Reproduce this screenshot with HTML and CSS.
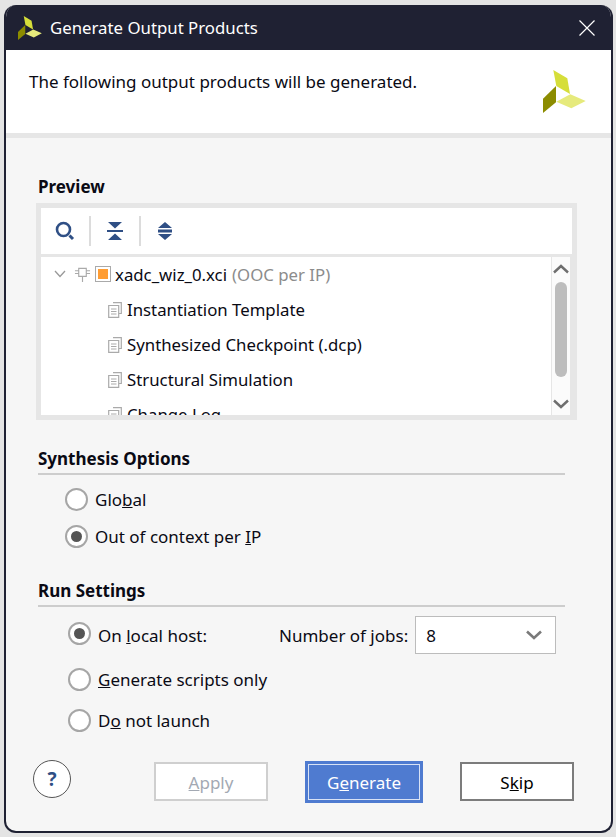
FILE: index.html
```html
<!DOCTYPE html>
<html lang="en">
<head>
    <meta charset="UTF-8">
    <title>Generate Output Products</title>
    <link rel="stylesheet" href="styles.css">
</head>

<body>

  <div class="dialog">

    <div class="titlebar">
      <svg class="logo-small" viewBox="0 0 43 43">
        <polygon points="10.3,0 24.3,8.3 27,24 13.3,16" fill="#d6de3a"/>
        <polygon points="13.3,31.7 27.3,24.3 42.7,31 28.3,38.3" fill="#e6ea7c"/>
        <polygon points="0,28.7 13,16 13,32.3 0,43" fill="#8c8c00"/>
      </svg>
      <span class="title">Generate Output Products</span>
      <svg class="close" viewBox="0 0 16 16">
        <path d="M0.5 0.5 L15.5 15.5 M15.5 0.5 L0.5 15.5" stroke="#fff" stroke-width="1.2" fill="none"/>
      </svg>
    </div>

    <div class="banner">
      <p class="banner-text">The following output products will be generated.</p>
      <svg class="logo-big" viewBox="0 0 43 43">
        <polygon points="10.3,0 24.3,8.3 27,24 13.3,16" fill="#d6de3a"/>
        <polygon points="13.3,31.7 27.3,24.3 42.7,31 28.3,38.3" fill="#e6ea7c"/>
        <polygon points="0,28.7 13,16 13,32.3 0,43" fill="#8c8c00"/>
      </svg>
    </div>

    <div class="content">

      <h2 class="preview-title">Preview</h2>
      <div class="panel">
        <div class="toolbar">
          <svg class="tool" viewBox="0 0 20 20">
            <circle cx="8.5" cy="8.5" r="6.5" fill="none" stroke="#2f4f85" stroke-width="2.6"/>
            <path d="M14.5 14.5 L18 18" stroke="#2f4f85" stroke-width="3"/>
          </svg>
          <span class="tool-sep"></span>
          <svg class="tool" viewBox="0 0 20 20">
            <path d="M3 1 H17 L10 7.5 Z M3 19 H17 L10 12.5 Z" fill="#2f4f85"/>
            <rect x="2" y="9" width="16" height="2" fill="#2f4f85"/>
          </svg>
          <span class="tool-sep"></span>
          <svg class="tool" viewBox="0 0 20 20">
            <path d="M10 1 L17 7 H3 Z M10 19 L3 13 H17 Z" fill="#2f4f85"/>
            <rect x="3" y="8.5" width="14" height="3" fill="#2f4f85"/>
          </svg>
        </div>
        <div class="tree-wrap">
          <div class="tree">
            <div class="tree-row root">
              <svg class="twisty" viewBox="0 0 12 8">
                <path d="M1 1 L6 6.5 L11 1" fill="none" stroke="#999" stroke-width="1.3"/>
              </svg>
              <svg class="chip" viewBox="0 0 18 18">
                <path d="M5 2.5 H13 V11 H5 Z M9 11 V17 M1 5 H5 M1 8 H5 M13 5 H17 M13 8 H17" fill="#fff" stroke="#aaa" stroke-width="1.2"/>
              </svg>
              <span class="ip-box"><span class="ip-fill"></span></span>
              <span>xadc_wiz_0.xci</span>
              <span class="muted">(OOC per IP)</span>
            </div>
            <div class="tree-row child">
              <svg class="doc" viewBox="0 0 14 16"><use href="#doc-icon"/></svg>
              <span>Instantiation Template</span>
            </div>
            <div class="tree-row child">
              <svg class="doc" viewBox="0 0 14 16"><use href="#doc-icon"/></svg>
              <span>Synthesized Checkpoint (.dcp)</span>
            </div>
            <div class="tree-row child">
              <svg class="doc" viewBox="0 0 14 16"><use href="#doc-icon"/></svg>
              <span>Structural Simulation</span>
            </div>
            <div class="tree-row child">
              <svg class="doc" viewBox="0 0 14 16"><use href="#doc-icon"/></svg>
              <span>Change Log</span>
            </div>
          </div>
          <div class="scrollbar">
            <svg class="arrow" viewBox="0 0 16 10"><path d="M1 8.5 L8 2 L15 8.5" fill="none" stroke="#6e6e6e" stroke-width="2.4"/></svg>
            <div class="thumb"></div>
            <svg class="arrow" viewBox="0 0 16 10"><path d="M1 1.5 L8 8 L15 1.5" fill="none" stroke="#6e6e6e" stroke-width="2.4"/></svg>
          </div>
        </div>
      </div>

      <h2 class="section-title synth-title">Synthesis Options</h2>
      <div class="synth-options">
        <label class="option"><span class="radio"></span><span>Glo<u>b</u>al</span></label>
        <label class="option"><span class="radio checked"></span><span>Out of context per <u>I</u>P</span></label>
      </div>

      <h2 class="section-title run-title">Run Settings</h2>
      <div class="run-options">
        <div class="option local">
          <span class="radio checked"></span><span class="low">On <u>l</u>ocal host:</span>
          <span class="jobs-label low">Number of jobs:</span>
          <span class="combo">
            <span>8</span>
            <svg class="combo-arrow" viewBox="0 0 16 10"><path d="M1 1.5 L8 8 L15 1.5" fill="none" stroke="#7a7a7a" stroke-width="2.6"/></svg>
          </span>
        </div>
        <label class="option"><span class="radio"></span><span><u>G</u>enerate scripts only</span></label>
        <label class="option"><span class="radio"></span><span>D<u>o</u> not launch</span></label>
      </div>

      <div class="buttons">
        <span class="help">?</span>
        <button type="button" class="btn btn-disabled"><u>A</u>pply</button>
        <button type="button" class="btn btn-default">G<u>e</u>nerate</button>
        <button type="button" class="btn btn-plain">S<u>k</u>ip</button>
      </div>

    </div>
  </div>

  <svg class="defs" width="0" height="0">
    <symbol id="doc-icon" viewBox="0 0 14 16">
      <path d="M5 0.7 H13.3 V11.5 H11 M0.7 3.5 H10.7 V15.3 H0.7 Z" fill="#fff" stroke="#aaa" stroke-width="1.2"/>
      <path d="M3 7 H8.5 M3 9.5 H8.5 M3 12 H8.5" stroke="#aaa" stroke-width="1"/>
    </symbol>
  </svg>

</body>
</html>
```

FILE: styles.css
```css
* {
	box-sizing: border-box;
}
html, body {
	height: 100%;
}
body {
	margin: 0;
	background: #e4e4e4;
	font-family: "Noto Sans", "Open Sans", sans-serif;
	font-size: 17px;
	color: #0a0a14;
	overflow: hidden;
}
.defs {
	position: absolute;
}

.dialog {
	width: 609px;
	height: 828px;
	margin: 5px 0 0 4px;
	background: #f6f6f6;
	border: 2px solid #1f2133;
	border-top: none;
	border-radius: 12px;
	overflow: hidden;
	display: flex;
	flex-direction: column;
}

.titlebar {
	flex: 0 0 45px;
	background: #1f2133;
	display: flex;
	align-items: center;
	padding: 0 16px 0 12px;
	color: #fff;
}
.logo-small {
	width: 24px;
	height: 24px;
	margin-right: 8px;
}
.title {
	flex: 1;
	font-size: 16.8px;
}
.close {
	width: 16px;
	height: 16px;
}

.banner {
	flex: 0 0 88px;
	background: #fff;
	border-bottom: 5px solid #e6e6e6;
	display: flex;
	justify-content: space-between;
	padding: 20px 25px 0 23px;
}
.banner-text {
	margin: 0;
}
.logo-big {
	width: 43px;
	height: 43px;
}

.content {
	flex: 1;
	padding: 0 0 0 32px;
}

.preview-title, .section-title {
	margin: 0;
	font-size: 17px;
	font-weight: 700;
	line-height: 22px;
}
.preview-title {
	margin-top: 38px;
	padding-bottom: 5px;
}
.section-title {
	width: 527px;
	padding-bottom: 4px;
	border-bottom: 2px solid #cdcdcd;
}
.synth-title {
	margin-top: 27px;
	height: 28px;
	padding-top: 1px;
}
.run-title {
	margin-top: 24px;
	height: 28px;
	padding-top: 1px;
}

.panel {
	width: 541px;
	height: 217px;
	margin-left: -2px;
	border: 5px solid #e6e6e6;
	background: #e6e6e6;
}
.toolbar {
	height: 46px;
	background: #fff;
	display: flex;
	align-items: center;
	padding-left: 14px;
	margin-bottom: 3px;
}
.tool {
	width: 20px;
	height: 20px;
}
.tool-sep {
	width: 2px;
	height: 30px;
	background: #dcdcdc;
	margin: 0 14px;
}
.tree-wrap {
	height: 158px;
	display: flex;
	padding-right: 2px;
}
.tree {
	flex: 1;
	background: #fff;
	overflow: hidden;
	padding-top: 1px;
	font-size: 16.8px;
}
.tree-row {
	height: 35px;
	display: flex;
	align-items: center;
	white-space: nowrap;
}
.root {
	height: 32px;
	margin-bottom: 2px;
	padding-left: 13px;
}
.twisty {
	width: 12px;
	height: 8px;
	margin-right: 8px;
}
.chip {
	width: 17px;
	height: 17px;
	margin-right: 4px;
}
.ip-box {
	width: 16px;
	height: 16px;
	border: 1px solid #aaa;
	padding: 2px;
	margin-right: 4px;
}
.ip-fill {
	display: block;
	width: 100%;
	height: 100%;
	background: #ff9d33;
}
.muted {
	color: #8c8c8c;
	margin-left: 5px;
}
.child {
	padding-left: 67px;
}
.doc {
	width: 14px;
	height: 16px;
	margin-right: 5px;
}
.scrollbar {
	width: 18px;
	margin-left: 1px;
	background: #fbfbfb;
	display: flex;
	flex-direction: column;
	align-items: center;
	padding-top: 7px;
}
.arrow {
	width: 16px;
	height: 10px;
}
.thumb {
	width: 12px;
	height: 95px;
	margin: 8px 0 22px;
	background: #bdbdbd;
	border-radius: 6px;
}

.option {
	display: flex;
	align-items: center;
	height: 37px;
}
.synth-options {
	margin: 6px 0 0 27px;
}
.run-options {
	margin: 6px 0 0 30px;
}
.run-options .option {
	height: 41px;
}
.run-options .local {
	margin-bottom: 5px;
}
.low {
	margin-top: 4px;
}
.radio {
	width: 23px;
	height: 23px;
	border: 2px solid #a6a6a6;
	border-radius: 50%;
	background: #fff;
	margin-right: 7px;
	flex: none;
	display: flex;
	align-items: center;
	justify-content: center;
}
.checked::after {
	content: "";
	width: 11px;
	height: 11px;
	border-radius: 50%;
	background: #555;
}
.jobs-label {
	margin-left: 72px;
	margin-right: 7px;
}
.combo {
	width: 141px;
	height: 38px;
	margin-top: 3px;
	background: #fff;
	border: 1px solid #bcbcbc;
	display: flex;
	align-items: center;
	justify-content: space-between;
	padding: 0 13px 0 10px;
}
.combo-arrow {
	width: 16px;
	height: 10px;
}

.buttons {
	display: flex;
	align-items: center;
	margin-top: 19px;
	margin-left: -5px;
}
.help {
	width: 38px;
	height: 38px;
	margin-bottom: 5px;
	border: 1px solid #555;
	border-radius: 50%;
	background: #fff;
	color: #2f4f85;
	font-weight: 700;
	font-size: 19px;
	display: flex;
	align-items: center;
	justify-content: center;
	margin-right: 83px;
}
.btn {
	height: 39px;
	width: 114px;
	font: inherit;
	background: #fff;
	padding: 1px 0 0;
}
.btn-disabled {
	border: 2px solid #cfcfcf;
	color: #a3a9b3;
}
.btn-default {
	width: 118px;
	height: 42px;
	margin: 0 37px;
	background: #4f7bd0;
	color: #fff;
	border: 3px solid #4f7bd0;
	outline: 1px solid #d8e2f5;
	outline-offset: -4px;
}
.btn-plain {
	border: 2px solid #7c7c7c;
}
```
